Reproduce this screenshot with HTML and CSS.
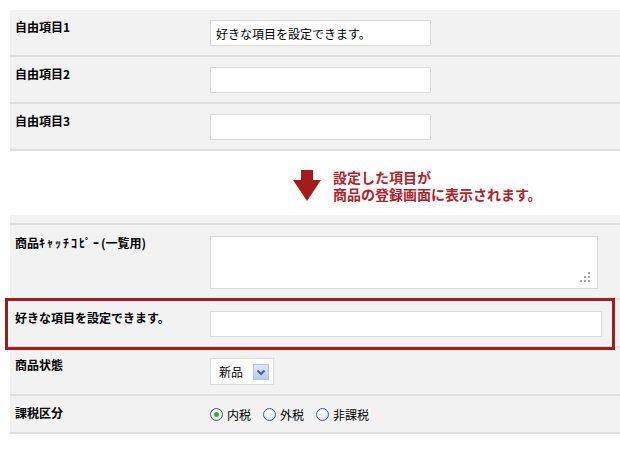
FILE: index.html
```html
<!DOCTYPE html>
<html lang="ja">
<head>
    <meta charset="UTF-8">
    <title>自由項目の設定</title>
    <link rel="stylesheet" href="styles.css">
</head>
<body>
    <div class="page">
        <!-- free item settings -->
        <div class="form-table">
            <div class="row">
                <div class="label">自由項目1</div>
                <div class="field"><input class="text-input" type="text" value="好きな項目を設定できます。"></div>
            </div>
            <div class="row">
                <div class="label">自由項目2</div>
                <div class="field"><input class="text-input" type="text" value=""></div>
            </div>
            <div class="row">
                <div class="label">自由項目3</div>
                <div class="field"><input class="text-input" type="text" value=""></div>
            </div>
        </div>

        <div class="notice">
            <svg class="notice-arrow" width="28" height="31" viewBox="0 0 28 31">
                <path d="M8 0 H20 V10 H28 L14 31 L0 10 H8 Z" fill="#a51b1b"/>
            </svg>
            <p class="notice-text">設定した項目が<br>商品の登録画面に表示されます。</p>
        </div>

        <!-- product registration form -->
        <div class="form-table">
            <div class="table-head"></div>
            <div class="row row-tall">
                <div class="label">商品<span class="kana">ｷｬｯﾁｺﾋﾟｰ</span>(一覧用)</div>
                <div class="field">
                    <div class="textarea-wrap">
                        <textarea class="text-area"></textarea>
                    </div>
                </div>
            </div>
            <div class="row row-tall highlight">
                <div class="label">好きな項目を設定できます。</div>
                <div class="field"><input class="text-input wide" type="text" value=""></div>
            </div>
            <div class="row">
                <div class="label">商品状態</div>
                <div class="field">
                    <div class="select-box">
                        <span>新品</span>
                        <span class="select-btn">
                            <svg width="14" height="14" viewBox="0 0 14 14">
                                <path d="M3.5 5.5 L7 9 L10.5 5.5" fill="none" stroke="#4a5f8a" stroke-width="2"/>
                            </svg>
                        </span>
                    </div>
                </div>
            </div>
            <div class="row">
                <div class="label">課税区分</div>
                <div class="field radio-group">
                    <span class="radio checked"></span><span class="radio-label">内税</span>
                    <span class="radio"></span><span class="radio-label">外税</span>
                    <span class="radio"></span><span class="radio-label">非課税</span>
                </div>
            </div>
        </div>
    </div>
</body>
</html>
```
FILE: styles.css
```css
body {
    margin: 0;
    background-color: #fff;
    font-family: 'Noto Sans CJK JP', sans-serif;
    font-size: 12px;
    color: #000;
}

.page {
    padding: 10px 0 0 10px;
    width: 610px;
}

.form-table {
    background-color: #f2f2f2;
}

.table-head {
    height: 8px;
    border-bottom: 2px solid #dedede;
}

.row {
    display: flex;
    padding: 10px 0 9px;
    border-bottom: 2px solid #dedede;
}

.row-tall {
    padding-top: 11px;
}

.label {
    width: 195px;
    padding-left: 5px;
    font-weight: bold;
    line-height: 14px;
    flex-shrink: 0;
}

.kana {
    letter-spacing: 2px;
}

.field {
    flex-grow: 1;
}

.text-input {
    box-sizing: border-box;
    display: block;
    width: 221px;
    height: 26px;
    margin: 0;
    padding: 0 5px;
    border: 1px solid #d9d9d9;
    background-color: #fff;
    font-family: inherit;
    font-size: 12px;
    color: #000;
    outline: none;
}

.text-input.wide {
    width: 392px;
}

.textarea-wrap {
    position: relative;
    width: 388px;
}

.text-area {
    box-sizing: border-box;
    display: block;
    width: 388px;
    height: 53px;
    margin: 0;
    border: 1px solid #d9d9d9;
    background-color: #fff;
    resize: none;
    outline: none;
}

/* resize grip dots */
.textarea-wrap::after {
    content: "";
    position: absolute;
    right: 8px;
    bottom: 7px;
    width: 2px;
    height: 2px;
    background-color: #a3a3a3;
    box-shadow: -4px 0 #a3a3a3, -8px 0 #a3a3a3, 0 -4px #a3a3a3, -4px -4px #a3a3a3, 0 -8px #a3a3a3;
}

.highlight {
    position: relative;
}

.highlight::after {
    content: "";
    position: absolute;
    left: -5px;
    top: -2px;
    width: 610px;
    height: 52px;
    box-sizing: border-box;
    border: 3px solid #a51b1b;
    pointer-events: none;
}

.notice {
    display: flex;
    align-items: flex-start;
    height: 46px;
    padding: 18px 0 0 283px;
}

.notice-arrow {
    display: block;
    flex-shrink: 0;
    margin-top: 1px;
}

.notice-text {
    margin: 0 0 0 12px;
    font-size: 14px;
    font-weight: bold;
    line-height: 17px;
    color: #b0222a;
}

.select-box {
    box-sizing: border-box;
    display: flex;
    align-items: center;
    width: 64px;
    height: 27px;
    padding-left: 8px;
    border: 1px solid #d9d9d9;
    background-color: #fff;
}

.select-btn {
    box-sizing: border-box;
    display: flex;
    align-items: center;
    justify-content: center;
    width: 16px;
    height: 16px;
    margin-left: 10px;
    border: 1px solid #b3c5ea;
    background: linear-gradient(#dde7fb, #b8cbf3);
}

.radio-group {
    display: flex;
    align-items: center;
    height: 17px;
}

.radio {
    box-sizing: border-box;
    position: relative;
    width: 13px;
    height: 13px;
    border: 1px solid #3f5f86;
    border-radius: 50%;
    background: radial-gradient(circle at 35% 30%, #fff 0%, #f4f4f4 40%, #cfcfcf 100%);
}

.radio.checked::after {
    content: "";
    position: absolute;
    left: 3px;
    top: 3px;
    width: 5px;
    height: 5px;
    border-radius: 50%;
    background-color: #2cb12c;
}

.radio-label {
    margin: 0 12px 0 4px;
    line-height: 17px;
}
```
